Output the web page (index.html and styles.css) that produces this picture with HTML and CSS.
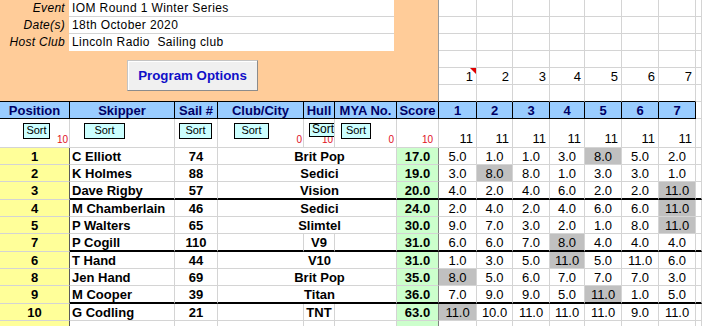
FILE: index.html
```html
<!DOCTYPE html>
<html>
<head>
<meta charset="utf-8">
<link rel="stylesheet" href="styles.css">
</head>
<body>
<table class="sheet">
<colgroup>
<col class="w-pos"><col class="w-skip"><col class="w-sail"><col class="w-club"><col class="w-hull"><col class="w-mya"><col class="w-score">
<col class="w-r38"><col class="w-r36"><col class="w-r37"><col class="w-r35"><col class="w-r37"><col class="w-r37"><col class="w-r37"><col class="w-x">
</colgroup>
<tbody>
<tr class="tr-top">
  <td class="panel" colspan="7" rowspan="6">
    <div class="panel-inner">
      <div class="info">
        <div class="lbl">Event</div><div class="val">IOM Round 1 Winter Series</div>
        <div class="lbl">Date(s)</div><div class="val">18th October 2020</div>
        <div class="lbl">Host Club</div><div class="val last">Lincoln Radio  Sailing club</div>
      </div>
      <div class="btn-row"><div class="prog-btn">Program Options</div></div>
    </div>
  </td>
  <td></td><td></td><td></td><td></td><td></td><td></td><td></td><td></td>
</tr>
<tr class="tr-top"><td></td><td></td><td></td><td></td><td></td><td></td><td></td><td></td></tr>
<tr class="tr-top"><td></td><td></td><td></td><td></td><td></td><td></td><td></td><td></td></tr>
<tr class="tr-top"><td></td><td></td><td></td><td></td><td></td><td></td><td></td><td></td></tr>
<tr class="tr-top nums">
  <td class="cmt-cell">1<span class="cmt"></span></td><td>2</td><td>3</td><td>4</td><td>5</td><td>6</td><td>7</td><td></td>
</tr>
<tr class="tr-top last-top"><td></td><td></td><td></td><td></td><td></td><td></td><td></td><td class="x"></td></tr>

<tr class="hdr">
  <th>Position</th><th>Skipper</th><th>Sail #</th><th>Club/City</th><th>Hull</th><th>MYA No.</th><th>Score</th>
  <th>1</th><th>2</th><th>3</th><th>4</th><th>5</th><th>6</th><th>7</th><td class="x"></td>
</tr>

<tr class="sort">
  <td><div class="sc"><span class="sbtn b-pos">Sort</span><span class="cnt c-pos">10</span></div></td>
  <td><div class="sc"><span class="sbtn b-skip">Sort</span></div></td>
  <td><div class="sc"><span class="sbtn b-sail">Sort</span></div></td>
  <td><div class="sc"><span class="sbtn b-club">Sort</span><span class="cnt c-club">0</span></div></td>
  <td><div class="sc"><span class="cnt c-hull">10</span><span class="sbtn b-hull">Sort</span></div></td>
  <td><div class="sc"><span class="sbtn b-mya">Sort</span><span class="cnt c-mya">0</span></div></td>
  <td><div class="sc"><span class="cnt c-score">10</span></div></td>
  <td class="rn">11</td><td class="rn">11</td><td class="rn">11</td><td class="rn">11</td><td class="rn">11</td><td class="rn">11</td><td class="rn">11</td><td></td>
</tr>

<tr class="r">
  <td class="pos">1</td><td class="skip">C Elliott</td><td class="sail">74</td><td class="club nb"></td><td class="hull nb"><div class="ov">Brit Pop</div></td><td class="mya"></td><td class="score">17.0</td>
  <td>5.0</td><td>1.0</td><td>1.0</td><td>3.0</td><td class="drop">8.0</td><td>5.0</td><td>2.0</td><td></td>
</tr>
<tr class="r">
  <td class="pos">2</td><td class="skip">K Holmes</td><td class="sail">88</td><td class="club nb"></td><td class="hull nb"><div class="ov">Sedici</div></td><td class="mya"></td><td class="score">19.0</td>
  <td>3.0</td><td class="drop">8.0</td><td>8.0</td><td>1.0</td><td>3.0</td><td>3.0</td><td>1.0</td><td></td>
</tr>
<tr class="r thick">
  <td class="pos">3</td><td class="skip">Dave Rigby</td><td class="sail">57</td><td class="club nb"></td><td class="hull nb"><div class="ov">Vision</div></td><td class="mya"></td><td class="score">20.0</td>
  <td>4.0</td><td>2.0</td><td>4.0</td><td>6.0</td><td>2.0</td><td>2.0</td><td class="drop">11.0</td><td></td>
</tr>
<tr class="r">
  <td class="pos">4</td><td class="skip">M Chamberlain</td><td class="sail">46</td><td class="club nb"></td><td class="hull nb"><div class="ov">Sedici</div></td><td class="mya"></td><td class="score">24.0</td>
  <td>2.0</td><td>4.0</td><td>2.0</td><td>4.0</td><td>6.0</td><td>6.0</td><td class="drop">11.0</td><td></td>
</tr>
<tr class="r">
  <td class="pos">5</td><td class="skip">P Walters</td><td class="sail">65</td><td class="club nb"></td><td class="hull nb"><div class="ov">Slimtel</div></td><td class="mya"></td><td class="score">30.0</td>
  <td>9.0</td><td>7.0</td><td>3.0</td><td>2.0</td><td>1.0</td><td>8.0</td><td class="drop">11.0</td><td></td>
</tr>
<tr class="r thick">
  <td class="pos">7</td><td class="skip">P Cogill</td><td class="sail">110</td><td class="club"></td><td class="hull"><div class="ov">V9</div></td><td class="mya"></td><td class="score">31.0</td>
  <td>6.0</td><td>6.0</td><td>7.0</td><td class="drop">8.0</td><td>4.0</td><td>4.0</td><td>4.0</td><td></td>
</tr>
<tr class="r">
  <td class="pos">6</td><td class="skip">T Hand</td><td class="sail">44</td><td class="club nb"></td><td class="hull nb"><div class="ov">V10</div></td><td class="mya"></td><td class="score">31.0</td>
  <td>1.0</td><td>3.0</td><td>5.0</td><td class="drop">11.0</td><td>5.0</td><td>11.0</td><td>6.0</td><td></td>
</tr>
<tr class="r">
  <td class="pos">8</td><td class="skip">Jen Hand</td><td class="sail">69</td><td class="club nb"></td><td class="hull nb"><div class="ov">Brit Pop</div></td><td class="mya"></td><td class="score">35.0</td>
  <td class="drop">8.0</td><td>5.0</td><td>6.0</td><td>7.0</td><td>7.0</td><td>7.0</td><td>3.0</td><td></td>
</tr>
<tr class="r thick">
  <td class="pos">9</td><td class="skip">M Cooper</td><td class="sail">39</td><td class="club nb"></td><td class="hull nb"><div class="ov">Titan</div></td><td class="mya"></td><td class="score">36.0</td>
  <td>7.0</td><td>9.0</td><td>9.0</td><td>5.0</td><td class="drop">11.0</td><td>1.0</td><td>5.0</td><td></td>
</tr>
<tr class="r">
  <td class="pos">10</td><td class="skip">G Codling</td><td class="sail">21</td><td class="club"></td><td class="hull"><div class="ov">TNT</div></td><td class="mya"></td><td class="score">63.0</td>
  <td class="drop">11.0</td><td>10.0</td><td>11.0</td><td>11.0</td><td>11.0</td><td>9.0</td><td>11.0</td><td></td>
</tr>
<tr class="r">
  <td class="pos"></td><td class="skip"></td><td class="sail"></td><td class="club"></td><td class="hull"></td><td class="mya"></td><td class="score"></td>
  <td></td><td></td><td></td><td></td><td></td><td></td><td></td><td></td>
</tr>
</tbody>
</table>
</body>
</html>
```

FILE: styles.css
```css
html, body {
  margin: 0;
  padding: 0;
  background: #ffffff;
  overflow: hidden;
}

body {
  font-family: "Liberation Sans", Arial, sans-serif;
  color: #000;
}

.sheet {
  border-collapse: separate;
  border-spacing: 0;
  table-layout: fixed;
  width: 702px;
}

.w-pos { width: 70px; }
.w-skip { width: 105px; }
.w-sail { width: 43px; }
.w-club { width: 86px; }
.w-hull { width: 31px; }
.w-mya { width: 62px; }
.w-score { width: 42px; }
.w-r38 { width: 38px; }
.w-r36 { width: 36px; }
.w-r37 { width: 37px; }
.w-r35 { width: 35px; }
.w-x { width: 6px; }

td, th {
  padding: 0;
  box-sizing: border-box;
  border-right: 1px solid #d4d4d4;
  border-bottom: 1px solid #d4d4d4;
  font-size: 13px;
  line-height: 15px;
  white-space: nowrap;
  overflow: hidden;
  text-align: center;
  vertical-align: middle;
}

/* ---------- top area ---------- */
.tr-top { height: 17px; }

.panel {
  background: #ffcc99;
  border-right: 1px solid #9a9a9a;
  border-bottom: 1px solid #000;
  vertical-align: top;
  text-align: left;
}

.panel-inner {
  height: 101px;
  display: flex;
  flex-direction: column;
}

.info {
  display: grid;
  grid-template-columns: 69px 325px;
  grid-auto-rows: 17px;
}

.lbl {
  font-style: italic;
  font-size: 12px;
  line-height: 16px;
  text-align: right;
  padding-right: 4px;
  letter-spacing: 0.3px;
}

.val {
  background: #ffffff;
  border-bottom: 1px solid #d4d4d4;
  font-size: 12px;
  line-height: 16px;
  padding-left: 3px;
  letter-spacing: 0.4px;
  white-space: pre;
}

.val.last {
  border-bottom: none;
}

.btn-row {
  display: flex;
  padding-left: 127px;
  padding-top: 9px;
}

.prog-btn {
  width: 131px;
  height: 31px;
  box-sizing: border-box;
  display: flex;
  align-items: center;
  justify-content: center;
  background: #f0f0f0;
  border: 1px solid #c4c4c4;
  border-right-color: #8c8c8c;
  border-bottom-color: #8c8c8c;
  box-shadow: inset 1px 1px 0 #ffffff;
  color: #1010c8;
  font-weight: bold;
  font-size: 13.3px;
}

.nums td {
  text-align: right;
  padding-right: 3px;
  vertical-align: bottom;
  line-height: 14px;
}

.cmt-cell {
  position: relative;
}

.cmt {
  position: absolute;
  top: 0;
  right: 0;
  width: 0;
  height: 0;
  border-left: 6px solid transparent;
  border-top: 6px solid #e00000;
}

.last-top td {
  border-bottom: 1px solid #000;
}

.last-top td.x {
  border-bottom-color: #d4d4d4;
}

/* ---------- header ---------- */
.hdr { height: 17px; }

.hdr th {
  background: #99ccff;
  color: #000066;
  font-weight: bold;
  font-size: 13px;
  border-right: 1px solid #000;
  border-bottom: 1px solid #000;
}

/* ---------- sort row ---------- */
.sort { height: 29px; }

.sort td {
  vertical-align: top;
}

.sc {
  display: grid;
  height: 28px;
}

.sc > * {
  grid-area: 1 / 1;
}

.sbtn {
  justify-self: start;
  align-self: start;
  margin-top: 4px;
  height: 16px;
  box-sizing: border-box;
  border: 1px solid #000;
  background: #ccffff;
  font-size: 11px;
  line-height: 13px;
  text-align: center;
  overflow: hidden;
  position: relative;
  z-index: 1;
}

.b-pos { margin-left: 23px; width: 27px; }
.b-skip { margin-left: 14px; width: 41px; }
.b-sail { margin-left: 4px; width: 33px; }
.b-club { margin-left: 16px; width: 35px; }
.b-hull {
  margin-left: 5px;
  width: 26px;
  height: 14px;
  font-size: 12px;
  line-height: 11px;
  text-align: left;
  padding-left: 2px;
}
.b-mya { margin-left: 6px; width: 30px; }

.cnt {
  justify-self: end;
  align-self: end;
  font-size: 10px;
  line-height: 10px;
  color: #e0101e;
  margin-bottom: 2px;
}

.c-pos { margin-right: 1px; }
.c-club { margin-right: 1px; }
.c-hull { margin-right: 2px; }
.c-mya { margin-right: 2px; }
.c-score { margin-right: 5px; }

.sort td.rn {
  vertical-align: bottom;
  text-align: right;
  padding-right: 3px;
  padding-bottom: 2px;
  line-height: 13px;
}

/* ---------- data rows ---------- */
.r { height: 17px; }
.r.thick { height: 18px; }

.r.thick td {
  border-bottom: 2px solid #000;
}

.r.thick td.pos {
  border-bottom: 1px solid #d4d4d4;
}

.pos {
  background: #ffff99;
  font-weight: bold;
  border-right: 1px solid #5a5a5a;
}

.skip {
  font-weight: bold;
  text-align: left;
  padding-left: 2px;
}

.sail {
  font-weight: bold;
}

.hull {
  font-weight: bold;
  overflow: visible;
}

.ov {
  display: flex;
  justify-content: center;
  white-space: nowrap;
}

.nb {
  border-right: 0;
}

.score {
  background: #ccffcc;
  font-weight: bold;
  border-right: 1px solid #808080;
}

.drop {
  background: #c0c0c0;
}
```
